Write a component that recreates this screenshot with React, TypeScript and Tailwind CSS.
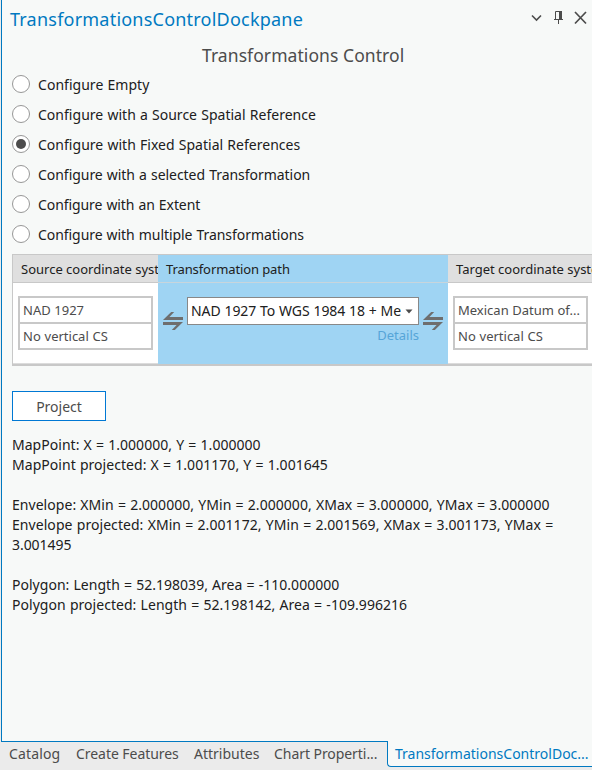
import React from "react";

const options = [
  { label: "Configure Empty", track: "tracking-[0.03px]" },
  { label: "Configure with a Source Spatial Reference", track: "tracking-[0.02px]" },
  { label: "Configure with Fixed Spatial References", track: "tracking-[0.02px]" },
  { label: "Configure with a selected Transformation", track: "tracking-[-0.04px]" },
  { label: "Configure with an Extent", track: "tracking-[-0.08px]" },
  { label: "Configure with multiple Transformations", track: "tracking-[-0.06px]" },
];

const results = [
  { text: "MapPoint: X = 1.000000, Y = 1.000000", track: "tracking-[0.03px]" },
  { text: "MapPoint projected: X = 1.001170, Y = 1.001645", track: "tracking-[0.04px]" },
  { text: "", track: "" },
  { text: "Envelope: XMin = 2.000000, YMin = 2.000000, XMax = 3.000000, YMax = 3.000000", track: "tracking-[0.045px]" },
  { text: "Envelope projected: XMin = 2.001172, YMin = 2.001569, XMax = 3.001173, YMax =", track: "tracking-[0.06px]" },
  { text: "3.001495", track: "tracking-[-0.05px]" },
  { text: "", track: "" },
  { text: "Polygon: Length = 52.198039, Area = -110.000000", track: "tracking-[0.02px]" },
  { text: "Polygon projected: Length = 52.198142, Area = -109.996216", track: "tracking-[0.04px]" },
];

function Radio({ label, track, checked }: { label: string; track: string; checked: boolean }) {
  return (
    <div className="flex h-[30px] items-center">
      <span className="flex size-[18px] shrink-0 items-center justify-center rounded-full border border-[#979797] bg-white">
        {checked && <span className="size-[10px] rounded-full bg-[#4c4c4c]" />}
      </span>
      <span className={"ml-2 whitespace-nowrap [word-spacing:0.5px] " + track}>{label}</span>
    </div>
  );
}

function Swap() {
  return (
    <svg width="20" height="18" viewBox="0 0 20 18" className="shrink-0" fill="#6e6e6e">
      <path d="M0 8 8.2 0H11.2L6.4 5H20V8Z" />
      <path d="M0 10H20L11.8 18H8.8L13.6 13H0Z" />
    </svg>
  );
}

function CoordBox({ top, bottom }: { top: string; bottom: string }) {
  return (
    <div className="h-[54px] w-[135px] border-2 border-[#c8c8c8] bg-white text-[#4c4c4c]">
      <div className="h-[26px] border-b-2 border-[#c8c8c8] pl-[3px] leading-[24px] whitespace-nowrap [word-spacing:0.2px]">{top}</div>
      <div className="h-[24px] pl-[3px] leading-[25px] whitespace-nowrap [word-spacing:0.4px]">{bottom}</div>
    </div>
  );
}

export default function App() {
  return (
    <div className="flex h-[770px] w-[592px] flex-col overflow-hidden bg-[#ebebeb] font-['Noto_Sans',sans-serif] text-[14px] text-[#202020]">
      <main className="ml-px flex h-[741px] flex-col border-l border-[#0079c1] bg-[#f7f9f8] pl-[10px]">
        <header className="flex h-[38px] shrink-0 items-center justify-between pr-[5px]">
          <h1 className="-ml-0.5 text-[18px] leading-[38px] tracking-[0.22px] whitespace-nowrap text-[#0079c1]">TransformationsControlDockpane</h1>
          <svg width="58" height="18" viewBox="529 9 58 18" className="mb-[2px]" fill="none" stroke="#4c4c4c">
            <path d="M532 15.5 536.5 20 541 15.5" strokeWidth="1.6" />
            <path d="M555.5 19V11.5H561M554 19.5H563M558.5 19.5V24" />
            <path d="M560.5 11V19" strokeWidth="3" />
            <path d="M575 12 586 23.5M586 12 575 23.5" strokeWidth="1.7" />
          </svg>
        </header>
        <h2 className="h-[31px] shrink-0 pl-[190px] text-[17.5px] leading-[34px] tracking-[0.07px] whitespace-nowrap text-[#4c4c4c]">Transformations Control</h2>
        <div className="flex h-[180px] shrink-0 flex-col">
          {options.map((o, i) => (
            <Radio key={o.label} label={o.label} track={o.track} checked={i === 2} />
          ))}
        </div>
        <section className="mt-[5px] flex h-[112px] shrink-0 border-t border-b-2 border-l border-[#c8c8c8] bg-white text-[13px]">
          <div className="w-[145px] shrink-0 overflow-hidden">
            <div className="h-[28px] overflow-hidden border-b border-[#c8c8c8] bg-[#dfdfdf] pl-2 leading-[28px] whitespace-nowrap">Source coordinate system</div>
            <div className="h-[81px] border-b border-[#dcdcdc] pt-[13px] pl-[5px]">
              <CoordBox top="NAD 1927" bottom="No vertical CS" />
            </div>
          </div>
          <div className="w-[290px] shrink-0 bg-[#9fd4f3]">
            <div className="h-[28px] border-b border-[#c8d5dc] pl-2 leading-[28px] tracking-[-0.1px]">Transformation path</div>
            <div className="flex h-[81px] pl-[5px]">
              <div className="pt-[29px]"><Swap /></div>
              <div className="ml-1 w-[232px] pt-[14px]">
                <div className="flex h-[28px] items-center border border-[#888888] bg-white pr-[5px] pl-[3px]">
                  <div className="w-[211px] overflow-hidden text-[14px] leading-[20px] tracking-[-0.05px] whitespace-nowrap [word-spacing:0.2px]">NAD 1927 To WGS 1984 18 + Mexico</div>
                  <svg width="8" height="5" viewBox="0 0 8 5" className="ml-1 shrink-0"><path d="M.5.5h7L4 4.5Z" fill="#4c4c4c" /></svg>
                </div>
                <div className="text-right leading-[21px] text-[#56a5d8]">Details</div>
              </div>
              <div className="ml-1 pt-[29px]"><Swap /></div>
            </div>
          </div>
          <div className="min-w-0 flex-1 overflow-hidden">
            <div className="h-[28px] overflow-hidden border-b border-[#c8c8c8] bg-[#dfdfdf] pl-2 leading-[28px] whitespace-nowrap">Target coordinate system</div>
            <div className="h-[81px] border-b border-[#dcdcdc] pt-[13px] pl-[5px]">
              <CoordBox top="Mexican Datum of..." bottom="No vertical CS" />
            </div>
          </div>
        </section>
        <button className="mt-[25px] h-[30px] w-[94px] shrink-0 border border-[#0078d4] bg-white text-[#4c4c4c]">Project</button>
        <div className="mt-[14px]">
          {results.map((r, i) => (
            <p key={i} className={"h-5 leading-5 whitespace-nowrap [word-spacing:0.5px] " + r.track}>{r.text}</p>
          ))}
        </div>
      </main>
      <footer className="ml-px flex h-[29px] text-[#4c4c4c]">
        <nav className="flex w-[386px] border-t border-[#0079c1] pl-2 leading-[23px] whitespace-nowrap">
          <span className="w-[67px] shrink-0 tracking-[0.15px]">Catalog</span>
          <span className="w-[118px] shrink-0 tracking-[-0.05px]">Create Features</span>
          <span className="w-[80px] shrink-0">Attributes</span>
          <span className="shrink-0 tracking-[-0.06px]">Chart Properti...</span>
        </nav>
        <div className="h-[26px] flex-1 rounded-bl-[4px] border-b border-l border-[#0079c1] bg-[#f7f9f8] pl-[7px] leading-[26px] whitespace-nowrap text-[#0079c1]">TransformationsControlDoc...</div>
      </footer>
    </div>
  );
}
